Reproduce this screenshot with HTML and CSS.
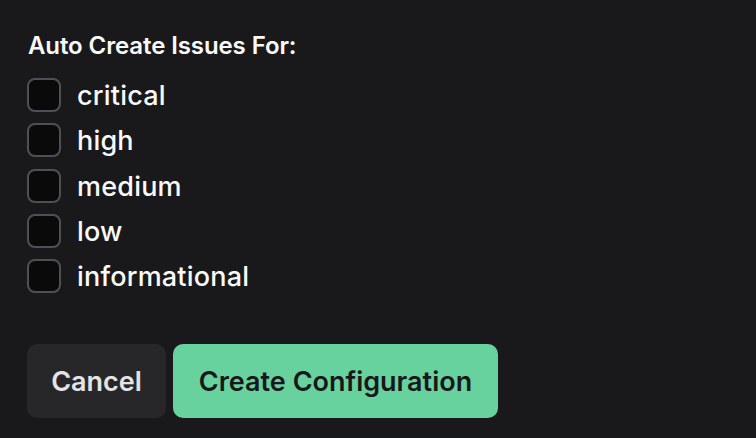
FILE: index.html
```html
<!DOCTYPE html>
<html>
<head>
<meta charset="utf-8">
<link rel="stylesheet" href="styles.css">
</head>
<body>
<div class="panel">
  <div class="title">Auto Create Issues For:</div>
  <div class="options">
    <label class="option"><span class="box"></span><span class="label">critical</span></label>
    <label class="option"><span class="box"></span><span class="label">high</span></label>
    <label class="option"><span class="box"></span><span class="label">medium</span></label>
    <label class="option"><span class="box"></span><span class="label">low</span></label>
    <label class="option"><span class="box"></span><span class="label">informational</span></label>
  </div>
  <div class="actions">
    <button class="btn btn-cancel">Cancel</button>
    <button class="btn btn-primary">Create Configuration</button>
  </div>
</div>
</body>
</html>
```
FILE: styles.css
```css
html, body {
  margin: 0;
  padding: 0;
  background: #19191b;
  height: 100%;
}
body {
  font-family: Inter, "Noto Sans", sans-serif;
  color: #fafafa;
}
.panel {
  padding: 29px 27px 0 27px;
}
.title {
  font-size: 24px;
  font-weight: 600;
  line-height: 34px;
  padding-left: 1px;
  letter-spacing: -0.1px;
}
.options {
  display: flex;
  flex-direction: column;
  gap: 11.33px;
  margin-top: 15px;
}
.option {
  display: flex;
  align-items: center;
  gap: 16px;
  height: 34px;
}
.box {
  width: 30px;
  height: 30px;
  border: 2px solid #4f4f55;
  border-radius: 8px;
  background: #0a0a0b;
  flex: none;
}
.label {
  font-size: 27px;
  font-weight: 500;
  line-height: 34px;
  letter-spacing: 0.2px;
  padding-top: 2px;
}
.actions {
  display: flex;
  gap: 7px;
  margin-top: 51px;
}
.btn {
  font-family: Inter, "Noto Sans", sans-serif;
  font-size: 27px;
  font-weight: 600;
  height: 74px;
  border: none;
  border-radius: 10px;
  padding: 0;
}
.btn-cancel {
  background: #27272a;
  color: #e4e4e7;
  width: 139px;
}
.btn-primary {
  background: #68d29f;
  color: #18181b;
  width: 325px;
}
```
